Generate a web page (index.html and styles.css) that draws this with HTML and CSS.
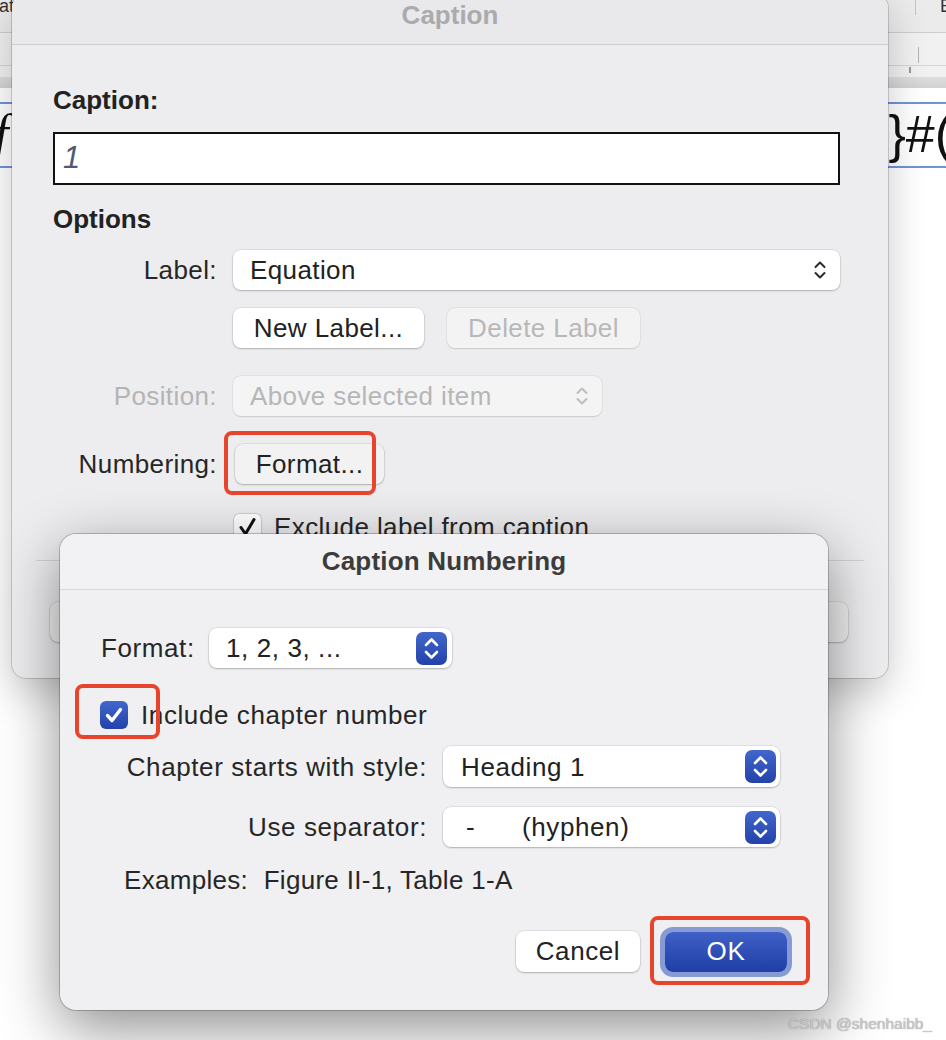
FILE: index.html
```html
<!DOCTYPE html>
<html lang="en">

<head>
    <meta charset="UTF-8">
    <meta name="viewport" content="width=device-width, initial-scale=1.0">
    <title>Caption</title>
    <link rel="stylesheet" href="styles.css">
</head>

<body>
    <div class="screen">
        <!-- document behind the dialogs -->
        <div class="toolbar">
            <span class="tb-left">at</span>
            <span class="tb-sep"></span>
            <span class="tb-right">E</span>
        </div>
        <div class="ruler">
            <span class="tick-long"></span>
        </div>
        <div class="ruler-sub">
            <span class="tick-short"></span>
        </div>
        <div class="ruler-edge"></div>
        <div class="page">
            <div class="equation">
                <span class="eq-left">f</span>
                <span class="eq-right">}#(</span>
            </div>
        </div>

        <!-- Caption dialog -->
        <div class="window caption-win">
            <div class="win-title">Caption</div>
            <div class="caption-body">
                <div class="field-title">Caption:</div>
                <div class="caption-input">1</div>
                <div class="field-title options-title">Options</div>

                <div class="row row-label">
                    <span class="row-name">Label:</span>
                    <div class="select label-select">
                        <span>Equation</span>
                        <svg class="updown" width="12" height="22" viewBox="0 0 12 22">
                            <path d="M1.5 8 L6 3.5 L10.5 8 M1.5 14 L6 18.5 L10.5 14" fill="none" stroke="#2b2b2b" stroke-width="2" stroke-linecap="round" stroke-linejoin="round" />
                        </svg>
                    </div>
                </div>

                <div class="row row-buttons">
                    <span class="row-name"></span>
                    <button class="btn new-label">New Label...</button>
                    <button class="btn delete-label" disabled>Delete Label</button>
                </div>

                <div class="row row-position">
                    <span class="row-name disabled">Position:</span>
                    <div class="select position-select">
                        <span>Above selected item</span>
                        <svg class="updown" width="12" height="22" viewBox="0 0 12 22">
                            <path d="M1.5 8 L6 3.5 L10.5 8 M1.5 14 L6 18.5 L10.5 14" fill="none" stroke="#bdbdbd" stroke-width="2" stroke-linecap="round" stroke-linejoin="round" />
                        </svg>
                    </div>
                </div>

                <div class="row row-numbering">
                    <span class="row-name">Numbering:</span>
                    <button class="btn format-btn">Format...</button>
                </div>

                <div class="row row-check">
                    <span class="check-plain">
                        <svg width="27" height="26" viewBox="0 0 27 26">
                            <path d="M7 13.5 L11.5 20 L20 5.5" fill="none" stroke="#111" stroke-width="3" stroke-linecap="round" stroke-linejoin="round" />
                        </svg>
                    </span>
                    <span>Exclude label from caption</span>
                </div>

                <div class="divider"></div>

                <div class="caption-actions">
                    <button class="btn wide-btn">Cancel</button>
                    <button class="btn wide-btn">OK</button>
                </div>
            </div>
        </div>

        <!-- Caption Numbering sheet -->
        <div class="window numbering-win">
            <div class="win-title sheet-title">Caption Numbering</div>
            <div class="numbering-body">
                <div class="row row-format">
                    <span class="format-name">Format:</span>
                    <div class="select format-select">
                        <span>1, 2, 3, ...</span>
                        <span class="stepper">
                            <svg width="31" height="33" viewBox="0 0 31 33">
                                <path d="M10 13 L15.5 7.5 L21 13 M10 20 L15.5 25.5 L21 20" fill="none" stroke="#fff" stroke-width="2.6" stroke-linecap="round" stroke-linejoin="round" />
                            </svg>
                        </span>
                    </div>
                </div>

                <div class="row row-include">
                    <span class="check-blue">
                        <svg width="28" height="28" viewBox="0 0 28 28">
                            <path d="M7.5 14.5 L12 19.5 L20.5 8.5" fill="none" stroke="#fff" stroke-width="3.4" stroke-linecap="round" stroke-linejoin="round" />
                        </svg>
                    </span>
                    <span>Include chapter number</span>
                </div>

                <div class="row row-chapter">
                    <span class="chapter-name">Chapter starts with style:</span>
                    <div class="select chapter-select">
                        <span>Heading 1</span>
                        <span class="stepper">
                            <svg width="31" height="33" viewBox="0 0 31 33">
                                <path d="M10 13 L15.5 7.5 L21 13 M10 20 L15.5 25.5 L21 20" fill="none" stroke="#fff" stroke-width="2.6" stroke-linecap="round" stroke-linejoin="round" />
                            </svg>
                        </span>
                    </div>
                </div>

                <div class="row row-separator">
                    <span class="chapter-name">Use separator:</span>
                    <div class="select chapter-select">
                        <span><span class="sep-char">-</span>(hyphen)</span>
                        <span class="stepper">
                            <svg width="31" height="33" viewBox="0 0 31 33">
                                <path d="M10 13 L15.5 7.5 L21 13 M10 20 L15.5 25.5 L21 20" fill="none" stroke="#fff" stroke-width="2.6" stroke-linecap="round" stroke-linejoin="round" />
                            </svg>
                        </span>
                    </div>
                </div>

                <div class="examples">
                    <span>Examples:</span>
                    <span class="examples-value">Figure II-1, Table 1-A</span>
                </div>

                <div class="sheet-actions">
                    <button class="btn cancel-btn">Cancel</button>
                    <button class="btn ok-btn">OK</button>
                </div>
            </div>
        </div>

        <!-- red annotation boxes -->
        <div class="mark mark-format"></div>
        <div class="mark mark-include"></div>
        <div class="mark mark-ok"></div>

        <div class="watermark">CSDN @shenhaibb_</div>
    </div>
</body>

</html>
```

FILE: styles.css
```css
* {
    box-sizing: border-box;
}

html,
body {
    margin: 0;
    background: #fff;
}

body {
    font-family: "Liberation Sans", Arial, sans-serif;
    font-size: 26px;
    color: #262626;
}

.screen {
    position: relative;
    width: 946px;
    height: 1040px;
    overflow: hidden;
    background: #fff;
}

/* background document */
.toolbar {
    height: 33px;
    background: #ebebeb;
    border-bottom: 1px solid #cdcdcd;
    display: flex;
    align-items: flex-start;
    font-size: 18px;
    line-height: 18px;
    color: #333;
}

.tb-left {
    margin-top: -3px;
    margin-left: -1px;
}

.tb-sep {
    margin-left: auto;
    margin-right: 24px;
    width: 1px;
    height: 15px;
    background: #c4c4c4;
}

.tb-right {
    margin-top: -3px;
    margin-right: -6px;
}

.ruler {
    height: 33px;
    background: #f1f1f1;
    border-bottom: 1px solid #d6d6d6;
    position: relative;
}

.tick-long {
    position: absolute;
    left: 918px;
    top: 14px;
    width: 1px;
    height: 16px;
    background: #b5b5b5;
}

.ruler-sub {
    height: 11px;
    background: #f1f1f1;
    position: relative;
}

.tick-short {
    position: absolute;
    left: 909px;
    top: 1px;
    width: 2px;
    height: 6px;
    background: #999;
}

.ruler-edge {
    height: 11px;
    background: linear-gradient(to bottom, #dedede, #d2d2d2);
}

.page {
    padding-top: 14px;
}

.equation {
    height: 66px;
    border-top: 2px solid #7193d8;
    border-bottom: 2px solid #7193d8;
    display: flex;
    justify-content: space-between;
    font-family: "Liberation Sans", sans-serif;
    font-size: 52px;
    line-height: 60px;
    color: #111;
}

.eq-left {
    font-family: "Liberation Serif", serif;
    font-style: italic;
    margin-left: -6px;
}

.eq-right {
    margin-right: -6px;
}

/* windows */
.window {
    position: absolute;
    border-radius: 14px;
}

.caption-win {
    left: 12px;
    top: -6px;
    width: 876px;
    height: 684px;
    background: #ededef;
    letter-spacing: 0.4px;
    box-shadow: 0 0 0 1px rgba(0, 0, 0, 0.16), 0 14px 40px rgba(0, 0, 0, 0.22);
}

.win-title {
    height: 51px;
    padding-top: 6px;
    line-height: 30px;
    text-align: center;
    font-weight: bold;
    letter-spacing: 0;
    color: #ababab;
    background: #e9e9eb;
    border-bottom: 1px solid #cfcfd1;
    border-radius: 14px 14px 0 0;
}

.caption-body {
    padding: 40px 48px 0 41px;
}

.field-title {
    font-weight: bold;
    line-height: 30px;
    letter-spacing: 0;
    color: #222;
}

.caption-input {
    margin-top: 17px;
    height: 53px;
    border: 2px solid #111;
    background: #fff;
    padding-left: 8px;
    font-style: italic;
    font-size: 31px;
    line-height: 48px;
    color: #4f5b74;
}

.options-title {
    margin-top: 19px;
}

.row {
    display: flex;
    align-items: center;
    line-height: 30px;
}

.row-name {
    width: 164px;
    margin-right: 16px;
    text-align: right;
    flex-shrink: 0;
}

.row-name.disabled {
    color: #b4b4b4;
}

.row-label {
    margin-top: 16px;
}

.row-buttons {
    margin-top: 18px;
}

.row-position {
    margin-top: 28px;
}

.row-numbering {
    margin-top: 28px;
}

.row-check {
    margin-top: 28px;
    padding-left: 181px;
}

.select {
    height: 40px;
    background: #fff;
    border-radius: 8px;
    box-shadow: 0 1px 2px rgba(0, 0, 0, 0.22), 0 0 0 0.5px rgba(0, 0, 0, 0.12);
    display: flex;
    align-items: center;
    justify-content: space-between;
    padding-left: 17px;
    padding-right: 14px;
    color: #222;
}

.label-select {
    width: 607px;
}

.position-select {
    width: 369px;
    background: #f4f4f5;
    color: #b6b6b6;
    box-shadow: 0 0.5px 1.5px rgba(0, 0, 0, 0.12), 0 0 0 0.5px rgba(0, 0, 0, 0.06);
}

.btn {
    height: 40px;
    border: none;
    border-radius: 8px;
    background: #fff;
    box-shadow: 0 1px 2px rgba(0, 0, 0, 0.22), 0 0 0 0.5px rgba(0, 0, 0, 0.12);
    font-family: inherit;
    font-size: 26px;
    letter-spacing: inherit;
    color: #222;
    padding: 0;
}

.new-label {
    width: 191px;
}

.delete-label {
    width: 193px;
    margin-left: 23px;
    background: #f3f3f4;
    color: #b8b8b8;
    box-shadow: 0 0.5px 1.5px rgba(0, 0, 0, 0.12), 0 0 0 0.5px rgba(0, 0, 0, 0.06);
}

.format-btn {
    width: 149px;
    margin-left: 2px;
    background: #f2f2f3;
}

.check-plain {
    width: 27px;
    height: 26px;
    border-radius: 5px;
    background: #fff;
    box-shadow: 0 0.5px 1.5px rgba(0, 0, 0, 0.3), 0 0 0 0.5px rgba(0, 0, 0, 0.15);
    margin-right: 13px;
    display: flex;
}

.divider {
    margin: 18px -24px 0 -17px;
    height: 1px;
    background: #d3d3d5;
}

.caption-actions {
    margin-top: 41px;
    margin-left: -3px;
    margin-right: -8px;
    display: flex;
    justify-content: space-between;
}

.wide-btn {
    width: 150px;
    background: #f2f2f3;
}

/* Caption Numbering sheet */
.numbering-win {
    left: 60px;
    top: 534px;
    width: 768px;
    height: 476px;
    background: #f0f0f2;
    border-radius: 16px;
    letter-spacing: 0.6px;
    box-shadow: 0 0 0 1px rgba(0, 0, 0, 0.22), 0 18px 60px rgba(0, 0, 0, 0.45);
    z-index: 2;
}

.sheet-title {
    height: 56px;
    padding-top: 12px;
    letter-spacing: 0.2px;
    color: #3c3c3c;
    background: #f2f2f4;
    border-bottom: 1px solid #d7d7d9;
    border-radius: 16px 16px 0 0;
}

.numbering-body {
    padding: 38px 41px 0 41px;
}

.format-name {
    width: 91px;
    margin-right: 17px;
}

.format-select {
    width: 243px;
    padding-right: 5px;
}

.stepper {
    width: 31px;
    height: 33px;
    border-radius: 7px;
    background: linear-gradient(to bottom, #4167cc, #2342ab);
    display: flex;
}

.row-include {
    margin-top: 32px;
}

.check-blue {
    width: 28px;
    height: 28px;
    margin-left: -1px;
    margin-right: 13px;
    border-radius: 6px;
    background: linear-gradient(to bottom, #4167cc, #2342ab);
    display: flex;
}

.row-chapter {
    margin-top: 16px;
}

.row-separator {
    margin-top: 20px;
}

.chapter-name {
    width: 326px;
    margin-right: 16px;
    text-align: right;
}

.chapter-select {
    width: 337px;
    padding-left: 18px;
    padding-right: 4px;
}

.row-chapter .chapter-select {
    height: 41px;
}

.sep-char {
    display: inline-block;
    width: 61px;
    padding-left: 5px;
}

.examples {
    margin-top: 18px;
    padding-left: 23px;
    line-height: 30px;
    letter-spacing: 0.3px;
}

.examples-value {
    margin-left: 8px;
}

.sheet-actions {
    margin-top: 36px;
    display: flex;
    justify-content: flex-end;
    align-items: center;
}

.cancel-btn {
    width: 124px;
    height: 41px;
}

.ok-btn {
    width: 122px;
    height: 40px;
    margin-left: 25px;
    color: #fff;
    background: linear-gradient(to bottom, #3f60c6, #1f3ea7);
    box-shadow: 0 0 0 5px rgba(88, 118, 200, 0.7);
}

/* annotations */
.mark {
    position: absolute;
    border: 4px solid #e8432b;
    border-radius: 8px;
    z-index: 5;
}

.mark-format {
    left: 224px;
    top: 431px;
    width: 152px;
    height: 64px;
}

.mark-include {
    left: 75px;
    top: 684px;
    width: 85px;
    height: 55px;
}

.mark-ok {
    left: 650px;
    top: 916px;
    width: 160px;
    height: 69px;
}

.watermark {
    position: absolute;
    right: 14px;
    bottom: 7px;
    z-index: 6;
    font-size: 15.5px;
    color: #c9c9c9;
    text-shadow: 0 0 1px rgba(0, 0, 0, 0.45);
}
```
